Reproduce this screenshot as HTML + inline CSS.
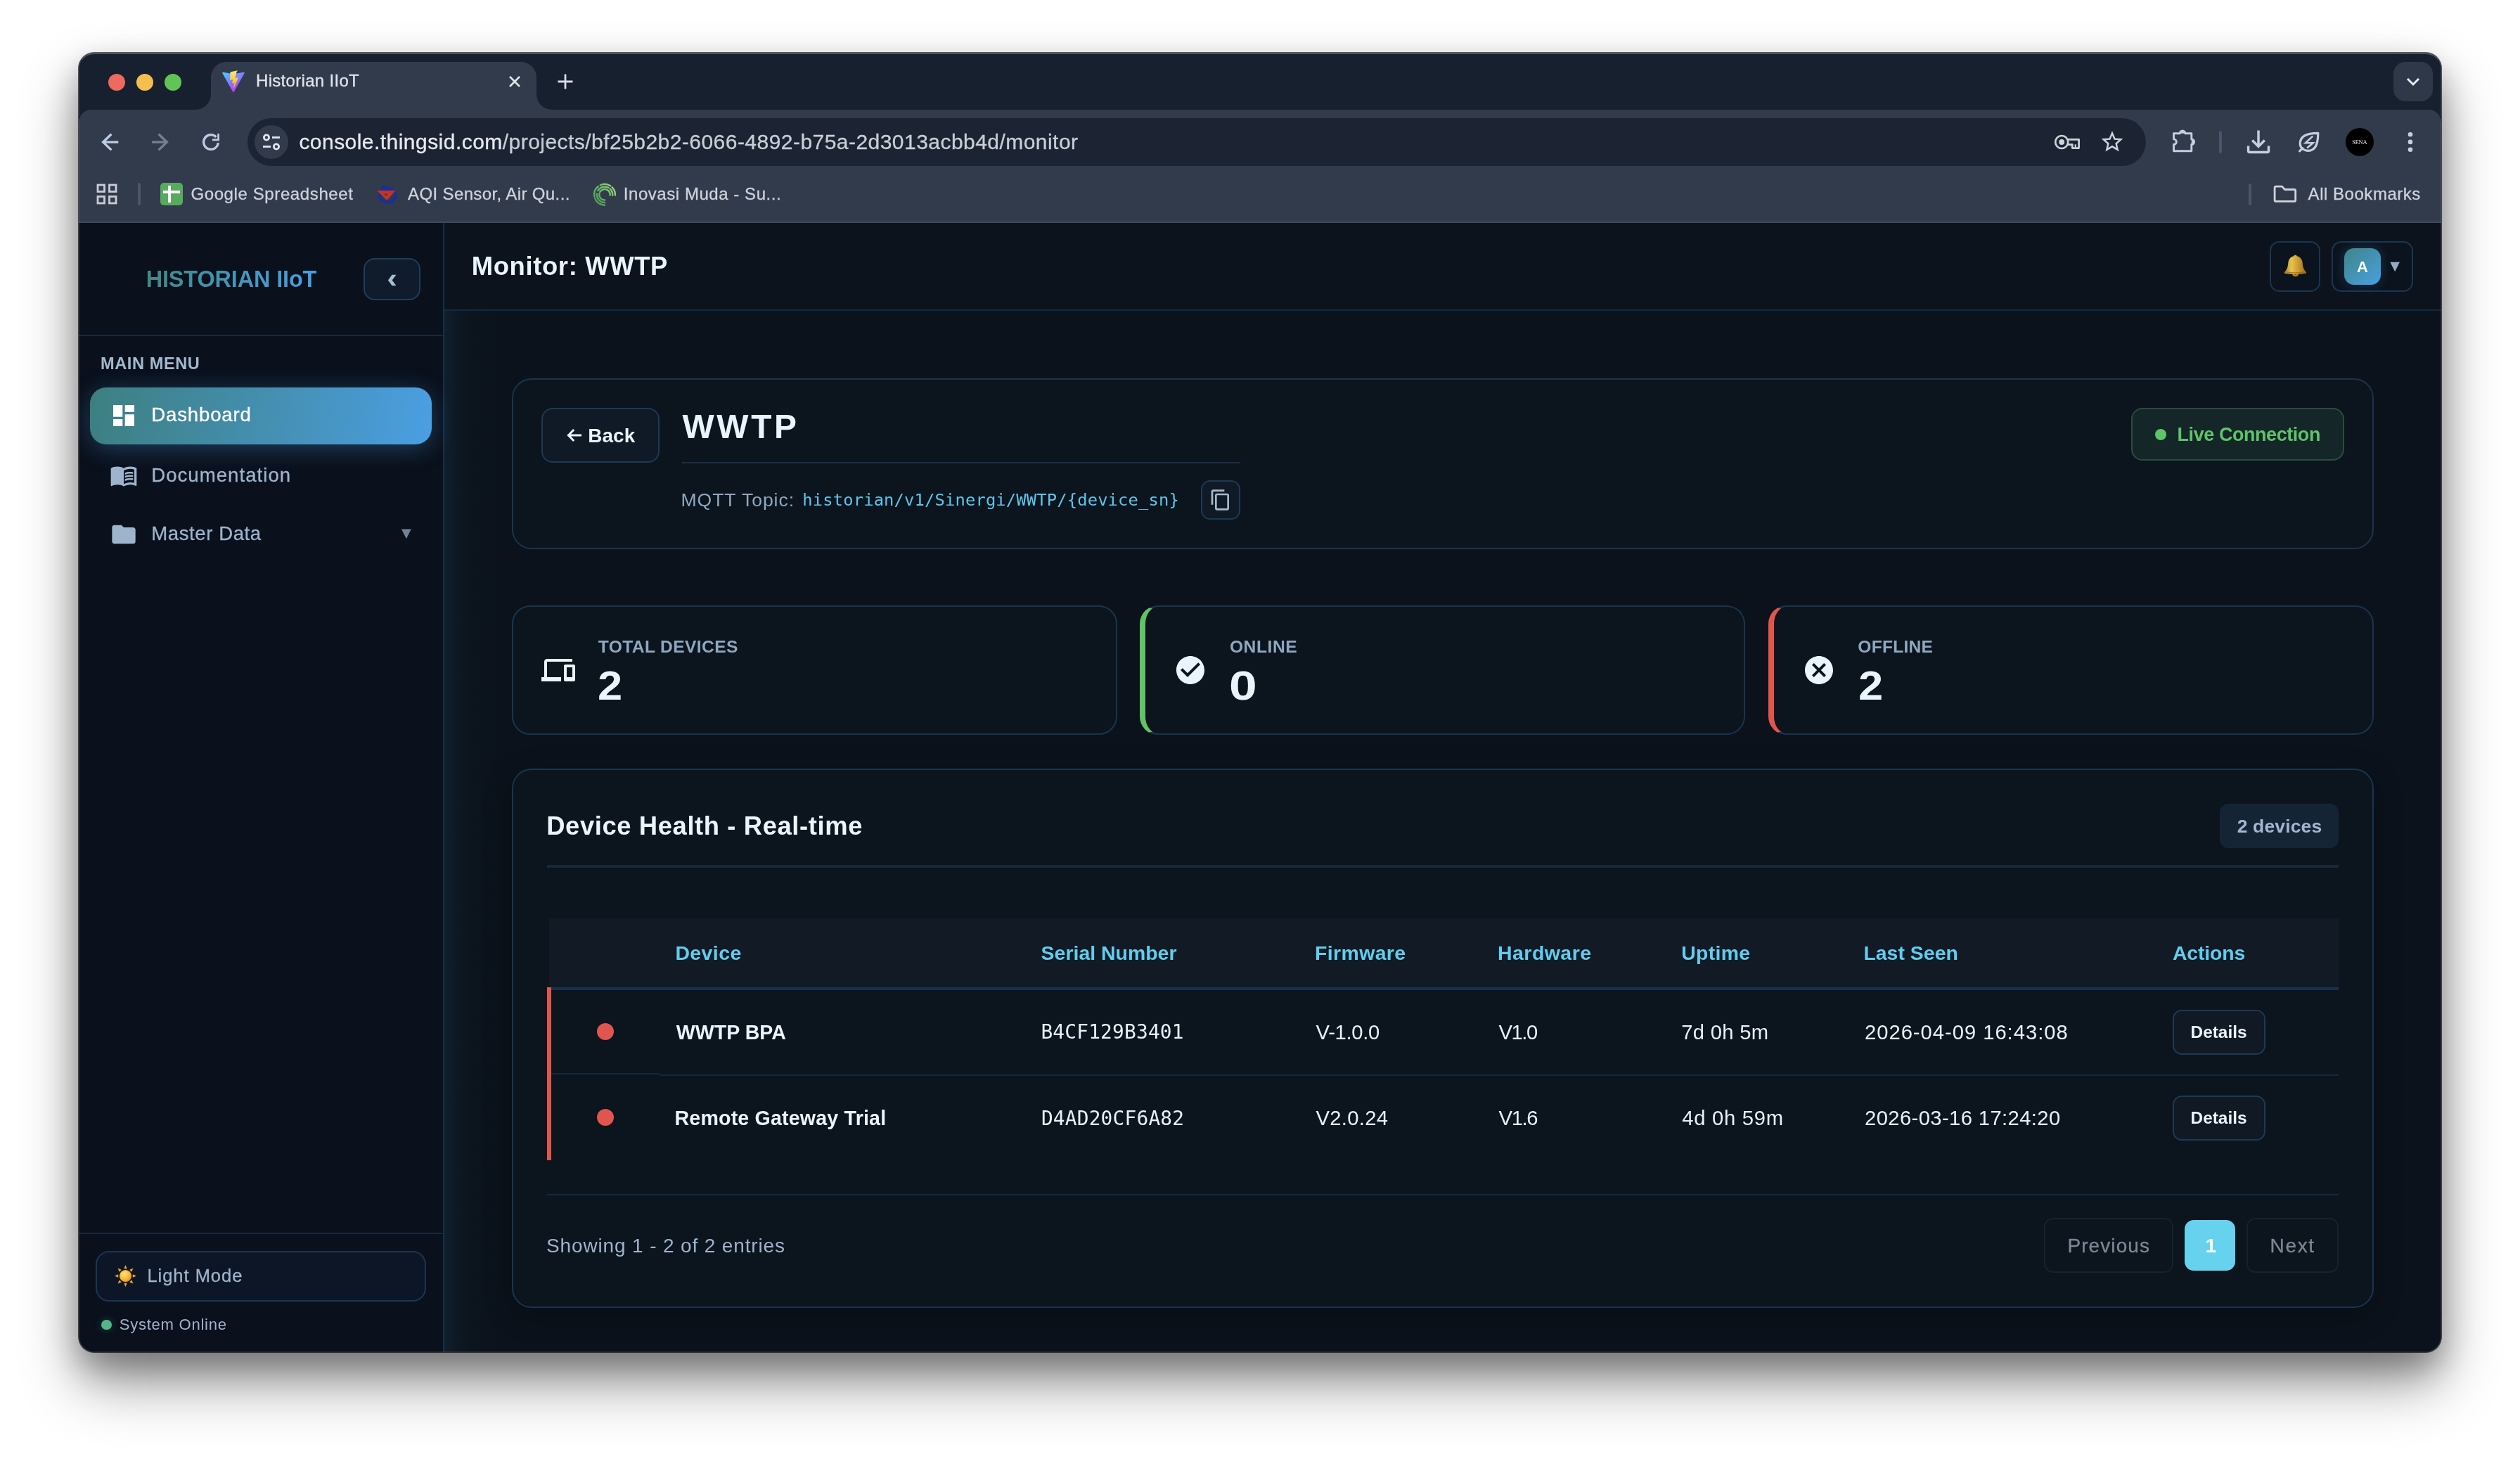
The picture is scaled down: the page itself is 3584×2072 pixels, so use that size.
<!DOCTYPE html>
<html lang="en">
<head>
<meta charset="utf-8">
<title>Historian IIoT</title>
<style>
*{box-sizing:border-box;margin:0;padding:0}
html,body{width:3584px;height:2072px;background:#fff;overflow:hidden}
body{position:relative;font-family:"Liberation Sans",sans-serif}
#shadow{position:absolute;left:112px;top:75px;width:3360px;height:1848px;border-radius:22px;
 box-shadow:0 0 0 1px rgba(0,0,0,.62),0 44px 82px rgba(0,0,0,.41),0 20px 44px rgba(0,0,0,.27)}
#win{position:absolute;left:112px;top:75px;width:3360px;height:1848px;border-radius:22px;overflow:hidden;background:#0b121b}
#o{position:absolute;left:-112px;top:-75px;width:3584px;height:2072px;will-change:transform}
#o div,#o svg,#o span{position:absolute}
.t{white-space:nowrap;display:block}
.b{border:2px solid #19354e}
</style>
</head>
<body>
<div id="shadow"></div>
<div id="win"><div id="o">

<!-- ===== browser chrome ===== -->
<div style="left:112px;top:75px;width:3360px;height:90px;background:#17202f"></div>
<div style="left:112px;top:156px;width:3360px;height:161px;background:#323b4b;border-radius:18px 18px 0 0"></div>
<div style="left:112px;top:315px;width:3360px;height:2px;background:#414959"></div>

<!-- tab -->
<svg style="left:270px;top:80px" width="520" height="80" viewBox="270 80 520 80"><path d="M278 156 A22 22 0 0 0 300 134 L300 110 A22 22 0 0 1 322 88 L741 88 A22 22 0 0 1 763 110 L763 134 A22 22 0 0 0 785 156 Z" fill="#323b4b"/></svg>
<!-- traffic lights -->
<div style="left:154px;top:105px;width:24px;height:24px;border-radius:50%;background:#ed6a5e"></div>
<div style="left:194px;top:105px;width:24px;height:24px;border-radius:50%;background:#f5bf4f"></div>
<div style="left:234px;top:105px;width:24px;height:24px;border-radius:50%;background:#61c554"></div>
<!-- vite favicon -->
<svg style="left:315px;top:99px" width="34" height="34" viewBox="0 0 34 34">
 <defs><linearGradient id="vg" x1="0" y1="0" x2="0.6" y2="1"><stop offset="0" stop-color="#41d1ff"/><stop offset="1" stop-color="#bd34fe"/></linearGradient>
 <linearGradient id="vy" x1="0" y1="0" x2="0" y2="1"><stop offset="0" stop-color="#ffea83"/><stop offset="1" stop-color="#ffa800"/></linearGradient></defs>
 <path d="M32.5 5.2 L17.9 31.4 a1 1 0 0 1 -1.8 0 L1.4 5.2 a1 1 0 0 1 1.1 -1.5 L17 6.3 L31.4 3.7 a1 1 0 0 1 1.1 1.5z" fill="url(#vg)"/>
 <path d="M23.2 1.2 L13 3.2 a.5 .5 0 0 0 -.4 .5 L12 14.4 a.5 .5 0 0 0 .6 .5 l2.9 -.7 a.5 .5 0 0 1 .6 .6 l-.9 4.2 a.5 .5 0 0 0 .6 .6 l1.8 -.5 a.5 .5 0 0 1 .6 .6 l-1.3 6.5 c-.1 .4 .5 .6 .7 .3 L23.6 12 a.5 .5 0 0 0 -.5 -.7 l-3 .6 a.5 .5 0 0 1 -.6 -.6 l1.9 -6.700 a.5 .5 0 0 0 -.6 -.6z" fill="url(#vy)"/>
</svg>
<!-- tab close, new tab, tab search -->
<svg style="left:720px;top:104px" width="24" height="24" viewBox="0 0 24 24" fill="none" stroke="#dfe3ea" stroke-width="2.6"><path d="M5 5 L19 19 M19 5 L5 19"/></svg>
<svg style="left:790px;top:102px" width="28" height="28" viewBox="0 0 28 28" fill="none" stroke="#d7dce5" stroke-width="2.8"><path d="M14 3.5 V24.500 M3.5 14 H24.500"/></svg>
<div style="left:3404px;top:88px;width:56px;height:56px;border-radius:17px;background:#2f3848"></div>
<svg style="left:3418px;top:102px" width="28" height="28" viewBox="0 0 28 28" fill="none" stroke="#e6e9ef" stroke-width="3"><path d="M6 10 L14 18 L22 10"/></svg>

<!-- nav buttons -->
<svg style="left:130px;top:180px" width="200" height="44" viewBox="130 180 200 44" fill="none" stroke-width="3.300">
 <path d="M168.300 202.100 H146.500 M158.400 190.800 L146.600 202.100 L158.400 213.400" stroke="#becbe4"/>
 <path d="M216.100 202.100 H237.500 M225.600 190.800 L237.400 202.100 L225.600 213.400" stroke="#768094"/>
 <path d="M310.300 203.100 A10.350 10.350 0 1 1 307.400 194.800" stroke="#becbe4"/>
 <path d="M310.600 190 V198.750 H302" stroke="#becbe4" stroke-width="2.750"/>
</svg>
<!-- url bar -->
<div style="left:352px;top:168px;width:2700px;height:68px;border-radius:34px;background:#1c2433"></div>
<div style="left:362px;top:178px;width:48px;height:48px;border-radius:50%;background:#323b4b"></div>
<svg style="left:370px;top:186px" width="32" height="32" viewBox="0 0 32 32" fill="none" stroke="#e2e6ee" stroke-width="2.8"><circle cx="9" cy="9.500" r="3.600"/><path d="M17 9.500 H28"/><circle cx="23" cy="22.500" r="3.600"/><path d="M4 22.500 H15"/></svg>
<!-- toolbar right icons (page coordinates) -->
<svg style="left:2900px;top:160px" width="572" height="90" viewBox="2900 160 572 90" fill="none" stroke-linejoin="round">
 <g stroke="#cfd3db" stroke-width="2.700">
  <circle cx="2932.200" cy="202" r="9"/>
  <path d="M2940.800 198.300 H2956.600 V210.600 H2947.300 V205.700 H2940.800"/>
  <path d="M2951.800 205.300 V209.400" stroke-width="2.200"/>
 </g>
 <circle cx="2932.200" cy="202" r="3.900" fill="#cfd3db"/>
 <g transform="translate(2985.500 183.100) scale(1.5417)"><path fill="#cfd3db" d="M22 9.240l-7.190-.620L12 2 9.190 8.630 2 9.240l5.460 4.730L5.820 21 12 17.270 18.180 21l-1.630-7.030L22 9.240zM12 15.400l-3.760 2.270 1-4.280-3.320-2.880 4.380-.380L12 6.100l1.710 4.040 4.380.380-3.320 2.880 1 4.280L12 15.400z"/></g>
 <g stroke="#c4cee2" stroke-width="2.900">
  <path d="M3091.500 189.800 H3100.200 A3.800 3.800 0 0 1 3107.800 189.800 H3116.800 V197.900 A3.800 3.800 0 0 1 3116.800 205.500 V214.800 H3091.500 V205.500 A3.800 3.800 0 0 0 3091.500 197.900 Z"/>
 </g>
 <path d="M3100.200 189.800 A3.800 3.800 0 0 1 3107.800 189.800 Z M3116.800 197.900 A3.800 3.800 0 0 1 3116.800 205.500 Z" fill="#c4cee2"/>
 <rect x="3156" y="186.200" width="4" height="31.700" rx="2" fill="#4b5569"/>
 <g stroke="#c4cee2" stroke-width="3.500" stroke-linejoin="miter">
  <path d="M3212 185.600 V208 M3203.200 199.500 L3212 208.300 L3220.800 199.500"/>
  <path d="M3197.600 207.600 V214.500 a2 2 0 0 0 2 2 H3224.500 a2 2 0 0 0 2 -2 V207.600" stroke-linejoin="round"/>
 </g>
 <g stroke="#c4cee2" stroke-width="3.200">
  <path d="M3296.800 189.300 C3283 189.300 3271.200 193 3271.200 204 C3271.200 210.500 3276.500 214.400 3283 214.400 C3292.500 214.400 3296.800 206.500 3296.800 189.300 Z"/>
  <path d="M3274.800 210.600 L3270.600 214.800" stroke-linecap="round"/>
  <path d="M3289.200 193.600 L3279 203.200 H3289.600 L3281.200 210.600" stroke-width="2.600" stroke-linejoin="miter"/>
 </g>
 <circle cx="3356" cy="201.900" r="20" fill="#000"/>
 <g fill="#c4cee2"><circle cx="3428" cy="191.200" r="3.300"/><circle cx="3428" cy="201.900" r="3.300"/><circle cx="3428" cy="212.700" r="3.300"/></g>
</svg>

<!-- bookmarks bar -->
<svg style="left:137px;top:261px" width="30" height="30" viewBox="0 0 30 30" fill="none" stroke="#c9ccd5" stroke-width="2.800"><rect x="2" y="2" width="9.500" height="9.500"/><rect x="18.500" y="2" width="9.500" height="9.500"/><rect x="2" y="18.500" width="9.500" height="9.500"/><rect x="18.500" y="18.500" width="9.500" height="9.500"/></svg>
<div style="left:196px;top:260px;width:4px;height:32px;border-radius:2px;background:#4c566a"></div>
<div style="left:228px;top:260px;width:32px;height:32px;border-radius:5px;background:#58aa5e"></div>
<div style="left:238.700px;top:264px;width:4.500px;height:23.600px;background:#fff"></div>
<div style="left:231.700px;top:270.500px;width:24.200px;height:4.500px;background:#fff"></div>
<!-- aqi favicon -->
<svg style="left:530px;top:258px" width="40" height="36" viewBox="530 258 40 36"><ellipse cx="551.200" cy="278" rx="11.100" ry="9.800" fill="none" stroke="#1b2f98" stroke-width="4.500"/><path d="M544 263.900 H552.100 L548.100 270.800 H539.900 Z" fill="#1b2f98"/><path d="M536 271.100 H562.700 L550.200 284.700 Z" fill="#c23328"/><path d="M546.100 275.700 H551 L549.800 278.800 Z" fill="#323b4b"/></svg>
<!-- inovasi favicon -->
<svg style="left:840px;top:256px" width="42" height="42" viewBox="840 256 42 42" fill="none"><defs><linearGradient id="ig" gradientUnits="userSpaceOnUse" x1="845" y1="290" x2="876" y2="262"><stop offset="0" stop-color="#4a9556"/><stop offset=".55" stop-color="#6dbb6a"/><stop offset="1" stop-color="#a8dc7c"/></linearGradient></defs><path d="M874.9 277.6 A14.9 14.9 0 0 0 870.5 266.3 M868.1 264.3 A14.9 14.9 0 0 0 853.7 263.3 M850.8 265.1 A14.9 14.9 0 0 0 845.3 279.4 M846.0 281.9 A14.9 14.9 0 0 0 860.0 291.7 M871.2 277.8 A11.2 11.2 0 0 0 867.6 268.6 M865.3 266.9 A11.2 11.2 0 0 0 850.3 271.2 M848.9 275.4 A11.2 11.2 0 0 0 860.0 288.0 M867.7 277.5 A7.7 7.7 0 0 0 864.6 270.7 M863.3 269.8 A7.7 7.7 0 0 0 853.2 273.2 M852.4 275.5 A7.7 7.7 0 0 0 860.0 284.5" stroke="url(#ig)" stroke-width="2.500" stroke-linecap="round"/></svg>
<div style="left:3198px;top:261px;width:4px;height:31px;border-radius:2px;background:#4c566a"></div>
<svg style="left:3230px;top:258px" width="40" height="34" viewBox="3230 258 40 34" fill="none" stroke="#cfd3da" stroke-width="2.800" stroke-linejoin="round"><path d="M3235.100 267.100 a2 2 0 0 1 2 -2 H3245.500 L3249.500 269.500 H3262.700 a2 2 0 0 1 2 2 V284.400 a2 2 0 0 1 -2 2 H3237.100 a2 2 0 0 1 -2 -2 Z"/></svg>

<!-- ===== app ===== -->
<div style="left:112px;top:317px;width:3360px;height:1606px;background:#0b121b"></div>
<div style="left:632px;top:442px;width:2840px;height:1481px;background:linear-gradient(90deg,rgba(16,31,45,1) 0px,rgba(14,26,38,.8) 18px,rgba(12,21,31,.45) 42px,rgba(11,18,27,0) 78px)"></div>
<!-- sidebar -->
<div style="left:112px;top:317px;width:518px;height:1606px;background:#0a101c"></div>
<div style="left:630px;top:317px;width:2px;height:1606px;background:#15304a"></div>
<div style="left:112px;top:476px;width:518px;height:2px;background:#14293d"></div>
<div style="left:112px;top:1753px;width:518px;height:2px;background:#14293d"></div>
<div class="b" style="left:517px;top:367px;width:81px;height:60px;border-radius:16px;background:#101c2c;border-color:#1d3e5c"></div>
<svg style="left:545px;top:385px" width="26" height="28" viewBox="545 385 26 28"><path d="M557.600 390.700 H563.400 L557.700 398.500 L563.400 406.300 H557.600 L551.900 398.500 Z" fill="#aabed2"/></svg>
<div style="left:128px;top:551px;width:486px;height:81px;border-radius:23px;background:linear-gradient(100deg,#3d7f80 0%,#4590b4 55%,#4b9fe3 100%);box-shadow:0 6px 34px rgba(74,160,228,.33)"></div>
<svg style="left:156.100px;top:570.900px" width="40" height="40" viewBox="0 0 24 24"><path fill="#fff" d="M3 13h8V3H3v10zm0 8h8v-6H3v6zm10 0h8V11h-8v10zm0-18v6h8V3h-8z"/></svg>
<svg style="left:155.900px;top:655.600px" width="40" height="40" viewBox="0 0 24 24"><path fill="#9db4cc" d="M21 5c-1.110-.350-2.330-.500-3.500-.500-1.950 0-4.050.400-5.500 1.500-1.450-1.100-3.550-1.500-5.500-1.500S2.450 4.900 1 6v14.650c0 .250.250.500.500.500.100 0 .150-.050.250-.050C3.100 20.450 5.050 20 6.500 20c1.950 0 4.050.400 5.500 1.500 1.350-.850 3.800-1.500 5.500-1.500 1.650 0 3.350.300 4.750 1.050.100.050.150.050.250.050.250 0 .500-.250.500-.500V6c-.600-.450-1.250-.750-2-1zm0 13.500c-1.100-.350-2.300-.500-3.500-.500-1.700 0-4.150.650-5.500 1.500V8c1.350-.850 3.800-1.500 5.500-1.500 1.200 0 2.400.150 3.500.500v11.500z"/><path fill="#9db4cc" d="M17.500 10.500c.880 0 1.730.090 2.500.260V9.240c-.790-.150-1.640-.240-2.500-.240-1.700 0-3.240.290-4.500.830v1.660c1.130-.640 2.700-.990 4.500-.990zM13 12.490v1.660c1.130-.640 2.700-.990 4.500-.990.880 0 1.730.090 2.500.260V11.900c-.790-.150-1.640-.240-2.500-.240-1.700 0-3.240.300-4.500.830zm4.500 1.840c-1.700 0-3.240.290-4.500.830v1.660c1.130-.640 2.700-.990 4.500-.990.880 0 1.730.090 2.500.260v-1.520c-.790-.160-1.640-.240-2.500-.240z"/></svg>
<svg style="left:156.100px;top:739.800px" width="40" height="40" viewBox="0 0 24 24"><path fill="#9db4cc" d="M10 4H4c-1.100 0-1.990.900-1.990 2L2 18c0 1.100.900 2 2 2h16c1.100 0 2-.900 2-2V8c0-1.100-.900-2-2-2h-8l-2-2z"/></svg>
<div class="b" style="left:136px;top:1779px;width:470px;height:72px;border-radius:19px;background:#0c1626;border-color:#1a3650"></div>
<!-- sun -->
<svg style="left:162.500px;top:1799px" width="31" height="31" viewBox="0 0 36 36"><defs><radialGradient id="sg" cx=".4" cy=".35" r=".7"><stop offset="0" stop-color="#ffe27a"/><stop offset=".6" stop-color="#f8b931"/><stop offset="1" stop-color="#ea8a1c"/></radialGradient></defs>
<g fill="#f2a724"><path d="M18 0 L20.500 6 H15.500z"/><path d="M18 36 L20.500 30 H15.500z"/><path d="M0 18 L6 15.500 V20.500z"/><path d="M36 18 L30 15.500 V20.500z"/><path d="M5.300 5.300 L11.300 7.800 L7.800 11.300z"/><path d="M30.700 5.300 L28.200 11.300 L24.700 7.800z"/><path d="M5.300 30.700 L7.800 24.700 L11.300 28.200z"/><path d="M30.700 30.700 L24.700 28.200 L28.200 24.700z"/></g><circle cx="18" cy="18" r="10" fill="url(#sg)"/></svg>
<div style="left:144px;top:1876.500px;width:14.500px;height:14.500px;border-radius:50%;background:#52b788;box-shadow:0 0 12px rgba(82,183,136,.32)"></div>

<!-- main header -->
<div style="left:632px;top:317px;width:2840px;height:123px;background:#0c131d"></div>
<div style="left:632px;top:440px;width:2840px;height:2px;background:#15293c"></div>
<div class="b" style="left:3228px;top:343px;width:72px;height:72px;border-radius:14px;background:#0b131e;border-color:#1a3650"></div>
<div class="b" style="left:3316px;top:343px;width:116px;height:72px;border-radius:14px;background:#0b131e;border-color:#1a3650"></div>
<div style="left:3334px;top:353px;width:52px;height:52px;border-radius:14px;background:linear-gradient(140deg,#3e8588 0%,#4aa0e0 100%);box-shadow:0 0 16px rgba(72,158,224,.26)"></div>
<!-- bell -->
<svg style="left:3246px;top:360px" width="38" height="36" viewBox="3246 360 38 36"><defs><linearGradient id="bg1" gradientUnits="userSpaceOnUse" x1="3250" y1="0" x2="3280" y2="0"><stop offset="0" stop-color="#b98a25"/><stop offset=".3" stop-color="#e6c452"/><stop offset=".55" stop-color="#d4a435"/><stop offset="1" stop-color="#9c6d1c"/></linearGradient></defs>
<ellipse cx="3264.600" cy="389.700" rx="4.300" ry="3.500" fill="#b9801f"/><ellipse cx="3264.600" cy="389.300" rx="2" ry="1.500" fill="#6e4a12"/>
<path d="M3264.500 362.800 c1.400 0 2.200 .6 2.300 1.500 c4.800 1.100 7.600 4.700 8 10.200 c.4 5.500 1.700 8.800 5 12.300 c.8 .9 .3 2.200 -1 2.300 c-9 1 -19.600 1 -28.600 0 c-1.300 -.1 -1.800 -1.400 -1 -2.300 c3.300 -3.500 4.600 -6.800 5 -12.300 c.4 -5.500 3.200 -9.100 8 -10.200 c.1 -.9 .9 -1.500 2.300 -1.500z" fill="url(#bg1)"/>
<path d="M3250.300 386.600 c8.500 1.600 20 1.600 28.600 0" fill="none" stroke="#8e5f14" stroke-width="1.200" opacity=".7"/></svg>

<!-- card 1 -->
<div class="b" style="left:728px;top:538px;width:2648px;height:243px;border-radius:28px;background:#0c141e"></div>
<div class="b" style="left:770px;top:580px;width:168px;height:78px;border-radius:16px;background:#0f1a26;border-color:#1c3a54"></div>
<svg style="left:804px;top:607px" width="26" height="24" viewBox="0 0 26 24" fill="none" stroke="#e9f4fe" stroke-width="3"><path d="M23 12 H5 M12.200 4 L4.400 12 L12.200 20"/></svg>
<div style="left:970px;top:657px;width:794px;height:2px;background:#17304a"></div>
<div class="b" style="left:1708px;top:683px;width:56px;height:56px;border-radius:13px;background:#0f1a26;border-color:#1c3a54"></div>
<svg style="left:1719.500px;top:695px" width="32" height="32" viewBox="0 0 24 24"><path fill="#a9b9cb" d="M16 1H4c-1.100 0-2 .900-2 2v14h2V3h12V1zm3 4H8c-1.100 0-2 .900-2 2v14c0 1.100.900 2 2 2h11c1.100 0 2-.900 2-2V7c0-1.100-.900-2-2-2zm0 16H8V7h11v14z"/></svg>
<div style="left:3031px;top:580px;width:303px;height:75px;border-radius:16px;background:#152628;border:2px solid #2a4e38"></div>
<div style="left:3065px;top:610px;width:16px;height:16px;border-radius:50%;background:#5ec46a"></div>

<!-- stat cards -->
<div class="b" style="left:728px;top:861px;width:861px;height:184px;border-radius:26px;background:#0c141e"></div>
<div class="b" style="left:1621px;top:861px;width:861px;height:184px;border-radius:26px;background:#0c141e;border-left:8px solid #60c365"></div>
<div class="b" style="left:2515px;top:861px;width:861px;height:184px;border-radius:26px;background:#0c141e;border-left:8px solid #e0564f"></div>
<svg style="left:770px;top:928.500px" width="48" height="48" viewBox="0 0 24 24"><path fill="#e9f4fe" d="M4 6h18V4H4c-1.100 0-2 .900-2 2v11H0v3h14v-3H4V6zm19 2h-6c-.550 0-1 .450-1 1v10c0 .550.450 1 1 1h6c.550 0 1-.450 1-1V9c0-.550-.450-1-1-1zm-1 9h-4v-7h4v7z"/></svg>
<svg style="left:1669px;top:928.500px" width="48" height="48" viewBox="0 0 24 24"><path fill="#e9f4fe" d="M12 2C6.480 2 2 6.480 2 12s4.480 10 10 10 10-4.480 10-10S17.520 2 12 2zm-2 15l-5-5 1.410-1.410L10 14.170l7.590-7.590L19 8l-9 9z"/></svg>
<svg style="left:2563px;top:928.500px" width="48" height="48" viewBox="0 0 24 24"><path fill="#e9f4fe" d="M12 2C6.470 2 2 6.470 2 12s4.470 10 10 10 10-4.470 10-10S17.530 2 12 2zm5 13.590L15.590 17 12 13.410 8.410 17 7 15.590 10.590 12 7 8.410 8.410 7 12 10.590 15.590 7 17 8.410 13.410 12 17 15.590z"/></svg>

<!-- table card -->
<div class="b" style="left:728px;top:1093px;width:2648px;height:767px;border-radius:28px;background:#0c141e;box-shadow:0 10px 40px rgba(0,0,0,.25)"></div>
<div style="left:3157px;top:1143px;width:169px;height:63px;border-radius:12px;background:#152435"></div>
<div style="left:778px;top:1230px;width:2548px;height:4px;background:#16293c"></div>
<div style="left:781px;top:1306px;width:2545px;height:98px;background:#111a25"></div>
<div style="left:778px;top:1404px;width:2548px;height:4px;background:#183149"></div>
<div style="left:778px;top:1404px;width:6px;height:246px;background:#e0564f"></div>
<div style="left:784px;top:1526px;width:154px;height:2px;background:#15293c"></div>
<div style="left:938px;top:1528px;width:2388px;height:2px;background:#15293c"></div>
<div style="left:778px;top:1698px;width:2548px;height:2px;background:#15293c"></div>
<div style="left:849px;top:1455px;width:24px;height:24px;border-radius:50%;background:#e0564f"></div>
<div style="left:849px;top:1577px;width:24px;height:24px;border-radius:50%;background:#e0564f"></div>
<div class="b" style="left:3090px;top:1436px;width:132px;height:64px;border-radius:13px;background:#101924;border-color:#1e3a54"></div>
<div class="b" style="left:3090px;top:1558px;width:132px;height:64px;border-radius:13px;background:#101924;border-color:#1e3a54"></div>
<div class="b" style="left:2907px;top:1732px;width:184px;height:78px;border-radius:13px;background:#0c141e;border-color:#14232f"></div>
<div style="left:3107px;top:1735px;width:72px;height:72px;border-radius:13px;background:#67d2ee"></div>
<div class="b" style="left:3195px;top:1732px;width:131px;height:78px;border-radius:13px;background:#0c141e;border-color:#14232f"></div>

<span class="t" style="left:364.0px;top:98.4px;height:34px;line-height:34px;font-size:24px;font-weight:400;color:#e1e5ec;letter-spacing:0.31px;-webkit-text-stroke:.3px;">Historian IIoT</span>
<span class="t" style="left:425.4px;top:181.0px;height:42px;line-height:42px;font-size:30px;font-weight:400;color:#e6e9ee;letter-spacing:0.46px;-webkit-text-stroke:.3px;">console.thingsid.com<span style="position:static;color:#c9cdd6">/projects/bf25b2b2-6066-4892-b75a-2d3013acbb4d/monitor</span></span>
<span class="t" style="left:271.4px;top:259.0px;height:34px;line-height:34px;font-size:24px;font-weight:400;color:#cfd3da;letter-spacing:0.61px;-webkit-text-stroke:.3px;">Google Spreadsheet</span>
<span class="t" style="left:580.0px;top:259.0px;height:34px;line-height:34px;font-size:24px;font-weight:400;color:#cfd3da;letter-spacing:0.38px;-webkit-text-stroke:.3px;">AQI Sensor, Air Qu...</span>
<span class="t" style="left:886.8px;top:259.0px;height:34px;line-height:34px;font-size:24px;font-weight:400;color:#cfd3da;letter-spacing:0.55px;-webkit-text-stroke:.3px;">Inovasi Muda - Su...</span>
<span class="t" style="left:3282.6px;top:259.0px;height:34px;line-height:34px;font-size:24px;font-weight:400;color:#cfd3da;letter-spacing:0.53px;-webkit-text-stroke:.3px;">All Bookmarks</span>
<span class="t" style="left:3345.2px;top:195.6px;height:12px;line-height:12px;font-size:8.5px;font-weight:400;color:#e4e4e4;font-family:'Liberation Serif', serif;letter-spacing:-0.27px;">SENA</span>
<span class="t" style="left:207.7px;top:374.5px;height:45px;line-height:45px;font-size:32.4px;font-weight:700;color:transparent;letter-spacing:-0.11px;background:linear-gradient(90deg,#3f8a86 0%,#4a9fe3 100%);-webkit-background-clip:text;background-clip:text;">HISTORIAN IIoT</span>
<span class="t" style="left:143.0px;top:501.2px;height:33px;line-height:33px;font-size:23.6px;font-weight:700;color:#a3b9cf;letter-spacing:0.57px;">MAIN MENU</span>
<span class="t" style="left:215.2px;top:570.3px;height:39px;line-height:39px;font-size:27.6px;font-weight:400;color:#ffffff;letter-spacing:0.84px;-webkit-text-stroke:.3px;">Dashboard</span>
<span class="t" style="left:215.2px;top:655.5px;height:39px;line-height:39px;font-size:27.6px;font-weight:400;color:#9db4cc;letter-spacing:1.03px;-webkit-text-stroke:.3px;">Documentation</span>
<span class="t" style="left:215.2px;top:739.4px;height:39px;line-height:39px;font-size:27.6px;font-weight:400;color:#9db4cc;letter-spacing:0.57px;-webkit-text-stroke:.3px;">Master Data</span>
<span class="t" style="left:566.3px;top:742.0px;height:33px;line-height:33px;font-size:23.5px;font-weight:400;color:#6f8297;">▼</span>
<span class="t" style="left:209.4px;top:1796.0px;height:36px;line-height:36px;font-size:25.5px;font-weight:400;color:#9db4cc;letter-spacing:0.98px;-webkit-text-stroke:.3px;">Light Mode</span>
<span class="t" style="left:169.7px;top:1867.7px;height:31px;line-height:31px;font-size:22.1px;font-weight:400;color:#9db4cc;letter-spacing:0.72px;">System Online</span>
<span class="t" style="left:670.8px;top:352.9px;height:51px;line-height:51px;font-size:36.4px;font-weight:700;color:#e9f4fe;letter-spacing:0.64px;">Monitor: WWTP</span>
<span class="t" style="left:3352.1px;top:363.6px;height:31px;line-height:31px;font-size:22px;font-weight:700;color:#ffffff;letter-spacing:2.38px;">A</span>
<span class="t" style="left:3394.7px;top:361.6px;height:32px;line-height:32px;font-size:23px;font-weight:400;color:#96aac3;">▼</span>
<span class="t" style="left:836.2px;top:599.5px;height:39px;line-height:39px;font-size:27.9px;font-weight:700;color:#e9f4fe;letter-spacing:0.11px;">Back</span>
<span class="t" style="left:970.4px;top:572.7px;height:67px;line-height:67px;font-size:47.9px;font-weight:700;color:#e9f4fe;letter-spacing:3.68px;">WWTP</span>
<span class="t" style="left:968.4px;top:692.5px;height:37px;line-height:37px;font-size:26.6px;font-weight:400;color:#8fa8c0;letter-spacing:0.95px;">MQTT Topic:</span>
<span class="t" style="left:1141.3px;top:694.5px;height:33px;line-height:33px;font-size:23.8px;font-weight:400;color:#5cc6ea;font-family:'DejaVu Sans Mono', 'Liberation Mono', monospace;letter-spacing:0.15px;">historian/v1/Sinergi/WWTP/{device_sn}</span>
<span class="t" style="left:3096.5px;top:598.6px;height:38px;line-height:38px;font-size:26.9px;font-weight:700;color:#5ec46a;letter-spacing:-0.38px;">Live Connection</span>
<span class="t" style="left:850.7px;top:903.2px;height:34px;line-height:34px;font-size:24.6px;font-weight:700;color:#8fa7bf;letter-spacing:0.39px;">TOTAL DEVICES</span>
<span class="t" style="left:1748.9px;top:903.2px;height:34px;line-height:34px;font-size:24.6px;font-weight:700;color:#8fa7bf;letter-spacing:0.56px;">ONLINE</span>
<span class="t" style="left:2642.3px;top:903.2px;height:34px;line-height:34px;font-size:24.6px;font-weight:700;color:#8fa7bf;letter-spacing:0.24px;">OFFLINE</span>
<span class="t" style="left:850.3px;top:934.5px;height:80px;line-height:80px;font-size:57.5px;font-weight:700;color:#e9f4fe;transform:scaleX(1.1);transform-origin:0 50%;">2</span>
<span class="t" style="left:1748.0px;top:934.8px;height:80px;line-height:80px;font-size:57.5px;font-weight:700;color:#e9f4fe;transform:scaleX(1.24);transform-origin:0 50%;">0</span>
<span class="t" style="left:2643.1px;top:934.5px;height:80px;line-height:80px;font-size:57.5px;font-weight:700;color:#e9f4fe;transform:scaleX(1.1);transform-origin:0 50%;">2</span>
<span class="t" style="left:777.2px;top:1148.5px;height:51px;line-height:51px;font-size:36.4px;font-weight:700;color:#e9f4fe;letter-spacing:0.60px;">Device Health - Real-time</span>
<span class="t" style="left:3181.7px;top:1156.5px;height:37px;line-height:37px;font-size:26.5px;font-weight:700;color:#a0b7cf;letter-spacing:0.15px;">2 devices</span>
<span class="t" style="left:960.4px;top:1334.5px;height:40px;line-height:40px;font-size:28.4px;font-weight:700;color:#62cdee;letter-spacing:0.46px;">Device</span>
<span class="t" style="left:1480.6px;top:1334.5px;height:40px;line-height:40px;font-size:28.4px;font-weight:700;color:#62cdee;letter-spacing:0.03px;">Serial Number</span>
<span class="t" style="left:1870.0px;top:1334.5px;height:40px;line-height:40px;font-size:28.4px;font-weight:700;color:#62cdee;letter-spacing:0.41px;">Firmware</span>
<span class="t" style="left:2130.0px;top:1334.5px;height:40px;line-height:40px;font-size:28.4px;font-weight:700;color:#62cdee;letter-spacing:0.52px;">Hardware</span>
<span class="t" style="left:2391.2px;top:1334.5px;height:40px;line-height:40px;font-size:28.4px;font-weight:700;color:#62cdee;letter-spacing:0.33px;">Uptime</span>
<span class="t" style="left:2650.4px;top:1334.5px;height:40px;line-height:40px;font-size:28.4px;font-weight:700;color:#62cdee;letter-spacing:0.04px;">Last Seen</span>
<span class="t" style="left:3090.0px;top:1334.5px;height:40px;line-height:40px;font-size:28.4px;font-weight:700;color:#62cdee;letter-spacing:-0.14px;">Actions</span>
<span class="t" style="left:961.7px;top:1448.0px;height:40px;line-height:40px;font-size:28.6px;font-weight:700;color:#e9f4fe;letter-spacing:0.01px;">WWTP BPA</span>
<span class="t" style="left:959.5px;top:1570.2px;height:40px;line-height:40px;font-size:28.6px;font-weight:700;color:#e9f4fe;letter-spacing:0.18px;">Remote Gateway Trial</span>
<span class="t" style="left:1480.4px;top:1448.3px;height:39px;line-height:39px;font-size:27.8px;font-weight:400;color:#e6f1fb;font-family:'DejaVu Sans Mono', 'Liberation Mono', monospace;letter-spacing:0.21px;">B4CF129B3401</span>
<span class="t" style="left:1480.9px;top:1570.5px;height:39px;line-height:39px;font-size:27.8px;font-weight:400;color:#e6f1fb;font-family:'DejaVu Sans Mono', 'Liberation Mono', monospace;letter-spacing:0.21px;">D4AD20CF6A82</span>
<span class="t" style="left:1871.6px;top:1447.5px;height:41px;line-height:41px;font-size:29.2px;font-weight:400;color:#e6f1fb;letter-spacing:-0.31px;">V-1.0.0</span>
<span class="t" style="left:1871.6px;top:1569.7px;height:41px;line-height:41px;font-size:29.2px;font-weight:400;color:#e6f1fb;letter-spacing:0.28px;">V2.0.24</span>
<span class="t" style="left:2131.6px;top:1447.5px;height:41px;line-height:41px;font-size:29.2px;font-weight:400;color:#e6f1fb;letter-spacing:-1.49px;">V1.0</span>
<span class="t" style="left:2131.6px;top:1569.7px;height:41px;line-height:41px;font-size:29.2px;font-weight:400;color:#e6f1fb;letter-spacing:-1.42px;">V1.6</span>
<span class="t" style="left:2391.3px;top:1447.5px;height:41px;line-height:41px;font-size:29.2px;font-weight:400;color:#e6f1fb;letter-spacing:0.28px;">7d 0h 5m</span>
<span class="t" style="left:2392.2px;top:1569.7px;height:41px;line-height:41px;font-size:29.2px;font-weight:400;color:#e6f1fb;letter-spacing:0.73px;">4d 0h 59m</span>
<span class="t" style="left:2652.0px;top:1447.5px;height:41px;line-height:41px;font-size:29.2px;font-weight:400;color:#e6f1fb;letter-spacing:0.98px;">2026-04-09 16:43:08</span>
<span class="t" style="left:2652.0px;top:1569.7px;height:41px;line-height:41px;font-size:29.2px;font-weight:400;color:#e6f1fb;letter-spacing:0.40px;">2026-03-16 17:24:20</span>
<span class="t" style="left:3115.6px;top:1450.6px;height:34px;line-height:34px;font-size:24.4px;font-weight:700;color:#e9f4fe;letter-spacing:-0.01px;">Details</span>
<span class="t" style="left:3115.6px;top:1572.7px;height:34px;line-height:34px;font-size:24.4px;font-weight:700;color:#e9f4fe;letter-spacing:-0.01px;">Details</span>
<span class="t" style="left:777.0px;top:1751.5px;height:39px;line-height:39px;font-size:28px;font-weight:400;color:#9db4cc;letter-spacing:0.86px;">Showing 1 - 2 of 2 entries</span>
<span class="t" style="left:2940.4px;top:1751.5px;height:39px;line-height:39px;font-size:28px;font-weight:400;color:#7d8794;letter-spacing:1.10px;-webkit-text-stroke:.3px;">Previous</span>
<span class="t" style="left:3136.5px;top:1751.5px;height:39px;line-height:39px;font-size:28px;font-weight:700;color:#ffffff;">1</span>
<span class="t" style="left:3228.6px;top:1751.5px;height:39px;line-height:39px;font-size:28px;font-weight:400;color:#7d8794;letter-spacing:1.65px;-webkit-text-stroke:.3px;">Next</span>
<div style="left:112px;top:75px;width:3360px;height:1848px;border-radius:22px;border:1px solid rgba(255,255,255,.13);border-top:2px solid rgba(255,255,255,.24);pointer-events:none"></div>
</div></div>
</body>
</html>
